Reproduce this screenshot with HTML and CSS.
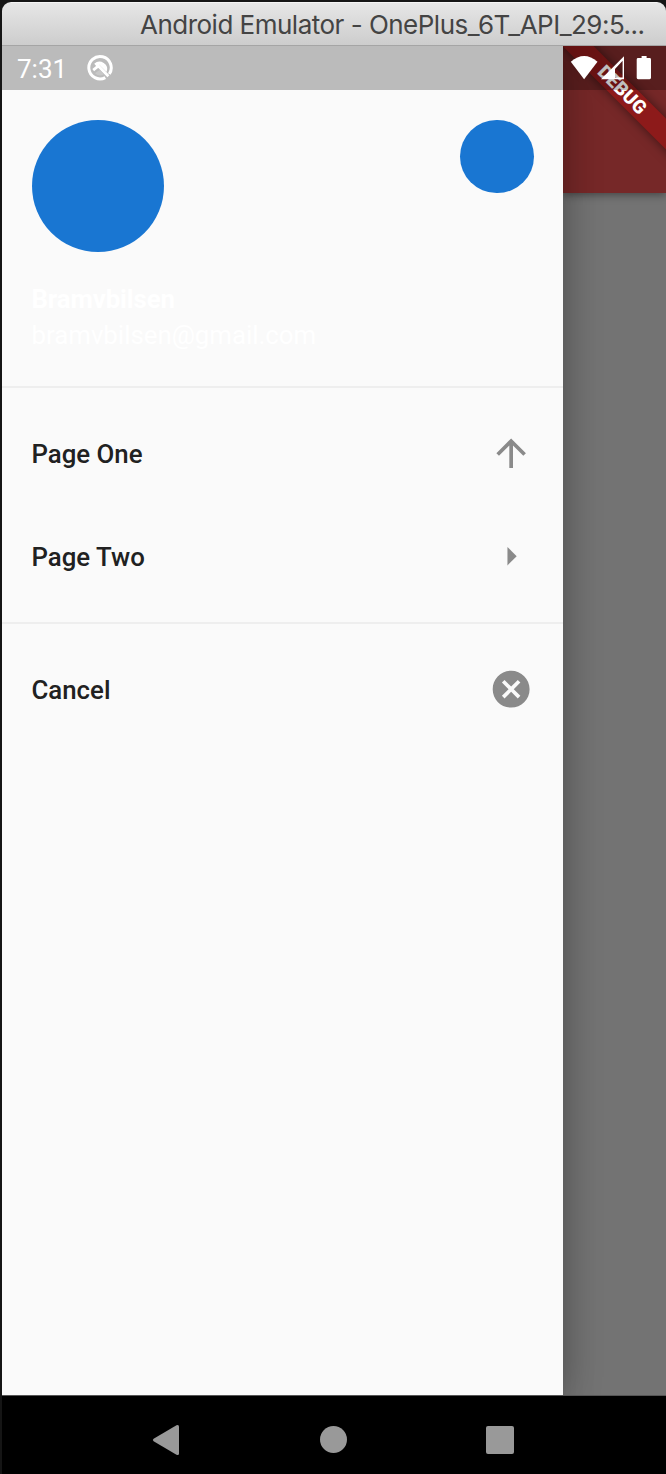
FILE: index.html
```html
<!DOCTYPE html>
<html lang="en">
<head>
<meta charset="utf-8">
<title>Android Emulator</title>
<link rel="stylesheet" href="styles.css">
</head>
<body>
<div class="window">
  <header class="titlebar"><span class="title">Android Emulator - OnePlus_6T_API_29:5...</span></header>
  <main class="screen">
    <div class="status">
      <span class="time">7:31</span>
      <svg class="notice" viewBox="0 0 28 28" width="28" height="28">
        <path d="M19.800 23.300A11.200 11.200 0 1 1 23.600 19.500" fill="none" stroke="#fff" stroke-width="3" transform="rotate(3 14 14)"/>
        <path d="M8.200 9.800A7.600 7.600 0 0 1 20.600 18L13.200 10.800L10.600 12.600Z" fill="#fff"/>
        <path d="M7.200 16.200L12.400 12L22.400 22.200" fill="none" stroke="#fff" stroke-width="2.800"/>
        <path d="M9 19.300A7.200 7.200 0 0 0 17.800 20.300L13.600 16Z" fill="#fff" opacity=".2"/>
      </svg>
      <svg class="indicators" viewBox="0 0 82 26" width="82" height="26">
        <path d="M.8 6.700Q14.100-4.500 27.500 6.700L14.100 24.200Z" fill="#fff"/>
        <path fill-rule="evenodd" d="M31 24.200L54 1.200V24.200ZM45 14V22.600H52.600V5.800Z" fill="#fff"/>
        <path d="M71.600 1h5v2h3q1.400 0 1.400 1.400v18.400q0 1.400-1.400 1.400H68.100q-1.400 0-1.400-1.400V4.400Q66.700 3 68.100 3H71.600Z" fill="#fff"/>
      </svg>
    </div>
    <aside class="drawer">
      <section class="account">
        <div class="avatars"><i class="avatar"></i><i class="avatar small"></i></div>
        <div class="name">Bramvbilsen</div>
        <div class="email">bramvbilsen@gmail.com</div>
      </section>
      <nav class="pages">
        <a class="item">Page One
          <svg class="icon" viewBox="0 0 24 24"><path d="M4 12l1.410 1.410L11 7.830V20h2V7.830l5.580 5.590L20 12l-8-8-8 8z"/></svg></a>
        <a class="item">Page Two
          <svg class="icon" viewBox="0 0 24 24"><path d="M10 17l5-5-5-5v10z"/></svg></a>
      </nav>
      <nav class="actions">
        <a class="item">Cancel
          <svg class="icon" viewBox="0 0 24 24"><path d="M12 2C6.470 2 2 6.470 2 12s4.470 10 10 10 10-4.470 10-10S17.530 2 12 2zm5 13.590L15.590 17 12 13.410 8.410 17 7 15.590 10.590 12 7 8.410 8.410 7 12 10.590 15.590 7 17 8.410 13.410 12 17 15.590z"/></svg></a>
      </nav>
    </aside>
    <div class="behind">
      <div class="appbar"></div>
      <div class="banner">DEBUG</div>
    </div>
  </main>
  <footer class="navbar">
    <svg viewBox="0 0 28 32" width="28" height="32"><path d="M1.600 14.700L24.500 1.200Q27 .4 27 2.500V29.500Q27 31.600 24.500 30.800L1.600 17.300Q0 16 1.600 14.700Z" fill="#999"/></svg>
    <i class="home"></i>
    <i class="recent"></i>
  </footer>
</div>
</body>
</html>
```
FILE: styles.css
```css
* { box-sizing: border-box; }
body {
  margin: 0;
  padding: 2px 0 0 2px;
  height: 1474px;
  overflow: hidden;
  background: #151515;
  font-family: Roboto, sans-serif;
}
.window {
  display: flex;
  flex-direction: column;
  height: 1472px;
  overflow: hidden;
  border-radius: 9px 9px 0 0;
  background: #000;
}
.titlebar {
  height: 44px;
  padding-left: 138px;
  border-top: 1px solid #f4f4f4;
  border-bottom: 1px solid #a5a5a5;
  background: linear-gradient(#e6e6e6, #cdcdcd);
  color: #444;
  font: 400 26px/44px Inter, sans-serif;
  letter-spacing: -.51px;
  white-space: nowrap;
}
.screen {
  position: relative;
  display: flex;
  height: 1350px;
  overflow: hidden;
  border-bottom: 1px solid #555;
}
.status {
  position: absolute;
  inset: 0 0 auto;
  z-index: 3;
  display: flex;
  align-items: center;
  height: 44px;
  padding: 0 14px 0 15px;
  background: rgba(0, 0, 0, .25);
  color: #fff;
}
.time { width: 69px; font-size: 26px; line-height: 44px; padding-top: 2px; }
.indicators { margin-left: auto; }
.drawer {
  position: relative;
  z-index: 2;
  width: 561px;
  background: #fafafa;
  box-shadow: 0 0 36px rgba(0, 0, 0, .28), 0 40px 36px rgba(0, 0, 0, .08);
  color: #212121;
  font-size: 25.8px;
  font-weight: 500;
}
.account {
  height: 342px;
  padding: 73.5px 29.5px 0;
  border-bottom: 2px solid #eee;
  color: #fff;
}
.avatars { display: flex; justify-content: space-between; height: 161px; }
.avatar { width: 132.8px; height: 132.8px; border-radius: 50%; background: #1976d2; }
.avatar.small { width: 73.8px; height: 73.8px; }
.name, .email { height: 36.6px; line-height: 37px; }
.name { font-weight: 700; letter-spacing: -.1px; }
.email { font-weight: 400; }
.pages { height: 236px; padding-top: 14px; border-bottom: 2px solid #eee; }
.actions { padding-top: 14px; }
.item {
  display: flex;
  align-items: center;
  justify-content: space-between;
  height: 103.3px;
  padding: 0 29.5px;
}
.icon { width: 44.3px; height: 44.3px; margin-top: -1.6px; fill: #8a8a8a; }
.behind { position: relative; flex: 1; overflow: hidden; background: #737373; }
.appbar { height: 147px; background: #762828; box-shadow: 0 2px 8px rgba(0, 0, 0, .4); }
.banner {
  position: absolute;
  top: 32.5px;
  left: -41.5px;
  width: 200px;
  height: 22px;
  transform: rotate(45deg);
  background: #8d1a1a;
  box-shadow: 0 0 11px rgba(0, 0, 0, .5);
  color: #fff;
  font-size: 18.8px;
  font-weight: 900;
  line-height: 22px;
  text-align: center;
}
.navbar {
  display: flex;
  align-items: center;
  justify-content: space-between;
  height: 78px;
  padding: 9px 152px 0 150px;
  background: #000;
}
.home { width: 27px; height: 27px; border-radius: 50%; background: #999; }
.recent { width: 28px; height: 28px; border-radius: 2px; background: #999; }
```
